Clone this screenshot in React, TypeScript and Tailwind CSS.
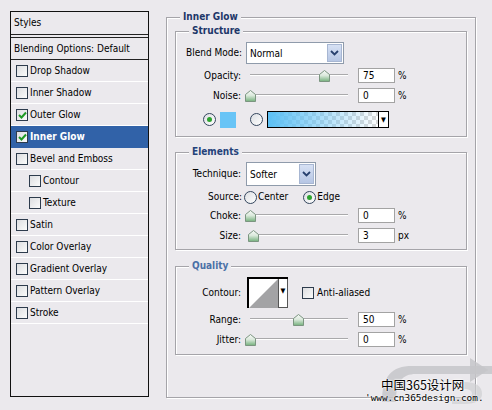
import type { ReactNode } from "react";

const font = { fontFamily: '"DejaVu Sans Condensed", "DejaVu Sans", sans-serif', fontStretch: "condensed" as const };

function Check({ checked }: { checked?: boolean }) {
  return (
    <span className="relative flex h-[12px] w-[12px] shrink-0 items-center justify-center border border-[#2d3b4c] bg-gradient-to-br from-[#dcdde0] to-[#fbfbfb]">
      {checked && (
        <svg width="9" height="8" viewBox="0 0 9 8">
          <path d="M1 4 L3.5 6.5 L8 1.5" fill="none" stroke="#1f9a24" strokeWidth="2" />
        </svg>
      )}
    </span>
  );
}

function StyleRow({ label, checked, indent, selected }: { label: string; checked?: boolean; indent?: boolean; selected?: boolean }) {
  return (
    <div
      className={`flex h-[22px] items-center border-b ${selected ? "border-[#3162a8] bg-[#3162a8] font-bold text-white" : "border-white"} ${indent ? "pl-[18px]" : "pl-[5px]"}`}
    >
      <Check checked={checked} />
      <span className="ml-[2px]">{label}</span>
    </div>
  );
}

function Group({ title, titleColor, className, children }: { title: string; titleColor: string; className: string; children?: ReactNode }) {
  return (
    <div className={`relative border border-[#a5a4a9] shadow-[inset_1px_1px_0_#fff,1px_1px_0_#fff] ${className}`}>
      <span className={`absolute -top-[8px] left-[13px] bg-[#ebe9ed] px-[3px] font-bold leading-[13px] ${titleColor}`}>{title}</span>
      {children}
    </div>
  );
}

function Chevron() {
  return (
    <svg width="9" height="6" viewBox="0 0 9 6">
      <path d="M1 1 L4.5 4.5 L8 1" fill="none" stroke="#27406e" strokeWidth="1.8" />
    </svg>
  );
}

function Select({ value, w, h }: { value: string; w: string; h: string }) {
  return (
    <div className={`flex items-center border border-[#8f9bab] bg-white pl-[3px] pr-[1px] ${w} ${h}`}>
      <span className="flex-1 pt-[2px]">{value}</span>
      <span className="flex h-[calc(100%-2px)] w-[15px] items-center justify-center border border-[#a7b6d2] bg-gradient-to-b from-[#d7e1f4] to-[#b6c6e4]">
        <Chevron />
      </span>
    </div>
  );
}

function Thumb() {
  return (
    <svg width="11" height="12" viewBox="0 0 11 12">
      <defs>
        <linearGradient id="thumbg" x1="0" y1="0" x2="0" y2="1">
          <stop offset="0" stopColor="#f7f9f7" />
          <stop offset="0.45" stopColor="#dbe9dc" />
          <stop offset="1" stopColor="#74b07c" />
        </linearGradient>
      </defs>
      <path d="M5.5 0.5 L10.5 4.5 V11.5 H0.5 V4.5 Z" fill="url(#thumbg)" stroke="#7b9580" />
    </svg>
  );
}

function Slider({ pos }: { pos: number }) {
  return (
    <div className="relative ml-[9px] h-[15px] w-[98px]">
      <div className="absolute left-0 right-0 top-[6px] h-[1px] bg-[#a9a9ab] shadow-[0_1px_0_#fff]" />
      <div className="absolute top-[2px]" style={{ left: pos - 5 }}>
        <Thumb />
      </div>
    </div>
  );
}

function SliderRow({ label, value, pos, unit, mt }: { label: string; value: string; pos: number; unit: string; mt: string }) {
  return (
    <div className={`flex h-[15px] items-center ${mt}`}>
      <div className="w-[65px] whitespace-nowrap text-right">{label}</div>
      <Slider pos={pos} />
      <div className="ml-[10px] flex h-[15px] w-[37px] items-center border border-[#a3a3a3] bg-white pl-[4px]">{value}</div>
      <span className="ml-[3px]">{unit}</span>
    </div>
  );
}

function Radio({ on }: { on?: boolean }) {
  return (
    <span className="flex h-[13px] w-[13px] shrink-0 items-center justify-center rounded-full border border-[#34465e] bg-gradient-to-br from-[#dcdee2] to-white">
      {on && <span className="h-[5px] w-[5px] rounded-full bg-[#2da32f]" />}
    </span>
  );
}

export default function App() {
  return (
    <div className="relative h-[410px] w-[492px] overflow-hidden bg-[#ebe9ed] text-[10px] leading-[12px] text-black" style={font}>
      <div className="flex pl-[10px] pt-[11px]">
        {/* styles list */}
        <div className="h-[386px] w-[139px] border border-[#111]">
          <div className="flex h-[23px] items-center border-b border-[#222] pl-[3px]">Styles</div>
          <div className="mt-[2px] flex h-[23px] items-center border-y border-[#222] pl-[3px]">Blending Options: Default</div>
          <StyleRow label="Drop Shadow" />
          <StyleRow label="Inner Shadow" />
          <StyleRow label="Outer Glow" checked />
          <StyleRow label="Inner Glow" checked selected />
          <StyleRow label="Bevel and Emboss" />
          <StyleRow label="Contour" indent />
          <StyleRow label="Texture" indent />
          <StyleRow label="Satin" />
          <StyleRow label="Color Overlay" />
          <StyleRow label="Gradient Overlay" />
          <StyleRow label="Pattern Overlay" />
          <StyleRow label="Stroke" />
        </div>

        {/* inner glow settings */}
        <Group title="Inner Glow" titleColor="text-[#1d3769]" className="ml-[17px] mt-[6px] h-[381px] w-[310px] px-[8px] pt-[13px]">
          <Group title="Structure" titleColor="text-[#1d3769]" className="h-[106px] w-[292px]">
            <div className="mt-[10px] flex items-center">
              <div className="w-[66px] whitespace-nowrap text-right">Blend Mode:</div>
              <div className="ml-[4px]">
                <Select value="Normal" w="w-[98px]" h="h-[22px]" />
              </div>
            </div>
            <SliderRow label="Opacity:" value="75" pos={74} unit="%" mt="mt-[4px]" />
            <SliderRow label="Noise:" value="0" pos={0} unit="%" mt="mt-[5px]" />
            <div className="mt-[8px] flex h-[17px] items-center pl-[27px]">
              <Radio on />
              <span className="ml-[4px] h-[16px] w-[16px] bg-[#68c4f6]" />
              <span className="ml-[14px]">
                <Radio />
              </span>
              <div className="ml-[4px] flex h-[17px] w-[122px] border border-black">
                <div
                  className="flex-1 bg-[linear-gradient(90deg,#5cc0f5,rgba(120,200,245,0)),repeating-conic-gradient(#d9d9d9_0_25%,#ffffff_0_50%)] bg-[length:100%_100%,8px_8px]"
                />
                <div className="flex w-[10px] items-center justify-center border-l border-black bg-white text-[7px]">▼</div>
              </div>
            </div>
          </Group>

          <Group title="Elements" titleColor="text-[#24427a]" className="mt-[15px] h-[98px] w-[292px]">
            <div className="mt-[9px] flex items-center">
              <div className="w-[65px] whitespace-nowrap text-right">Technique:</div>
              <div className="ml-[5px]">
                <Select value="Softer" w="w-[70px]" h="h-[24px]" />
              </div>
            </div>
            <div className="mt-[4px] flex h-[14px] items-center">
              <div className="w-[66px] text-right">Source:</div>
              <span className="ml-[2px]">
                <Radio />
              </span>
              <span className="ml-[1px]">Center</span>
              <span className="ml-[15px]">
                <Radio on />
              </span>
              <span className="ml-[1px]">Edge</span>
            </div>
            <SliderRow label="Choke:" value="0" pos={0} unit="%" mt="mt-[4px]" />
            <SliderRow label="Size:" value="3" pos={3} unit="px" mt="mt-[5px]" />
          </Group>

          <Group title="Quality" titleColor="text-[#4a70a6]" className="mt-[16px] h-[89px] w-[292px]">
            <div className="mt-[10px] flex h-[31px] items-center">
              <div className="w-[65px] text-right">Contour:</div>
              <div className="ml-[6px] flex h-[31px] w-[41px] border-l-2 border-t-2 border-black bg-white">
                <svg width="29" height="29" viewBox="0 0 29 29" className="shrink-0">
                  <path d="M0 29 L29 0 V29 Z" fill="#a3a3a5" />
                </svg>
                <div className="flex flex-1 items-start justify-center border-x border-b border-[#555] pt-[6px] text-[7px]">▼</div>
              </div>
              <span className="ml-[14px]">
                <Check />
              </span>
              <span className="ml-[3px]">Anti-aliased</span>
            </div>
            <SliderRow label="Range:" value="50" pos={48} unit="%" mt="mt-[4px]" />
            <SliderRow label="Jitter:" value="0" pos={0} unit="%" mt="mt-[5px]" />
          </Group>
        </Group>
      </div>

      {/* watermark */}
      <div className="absolute left-[360px] top-[354px] h-[56px] w-[132px]">
        <svg width="132" height="56" viewBox="0 0 132 56" className="absolute left-0 top-0">
          <path
            d="M22 48 C22 22 32 12 52 12 H150 V20 H56 C42 20 36 28 36 48 Z"
            fill="#c6c5c9"
            opacity="0.85"
          />
          <path d="M160 4 L178 16 L160 28 Z" fill="#c6c5c9" opacity="0.85" transform="translate(-50 0)" />
          <path d="M104 28 C116 28 122 32 122 40 C122 46 116 50 104 50 H92 V43 H106 C110 43 112 42 112 40 C112 37 110 35 104 35 Z" fill="#cfced2" opacity="0.7" />
        </svg>
        <div
          className="absolute left-[21px] top-[24px] whitespace-nowrap text-[12.5px] leading-[14px] text-black"
          style={{ fontFamily: '"Noto Sans CJK SC", sans-serif', textShadow: "0 0 2px #fff, 0 0 2px #fff, 0 0 1px #fff" }}
        >
          中国365设计网
        </div>
        <div
          className="absolute left-[5px] top-[38px] whitespace-nowrap text-[9.4px] leading-[11px] text-black"
          style={{ fontFamily: '"DejaVu Sans Mono", monospace', textShadow: "0 0 2px #fff, 0 0 2px #fff" }}
        >
          'www.cn365design.com.
        </div>
      </div>
    </div>
  );
}
